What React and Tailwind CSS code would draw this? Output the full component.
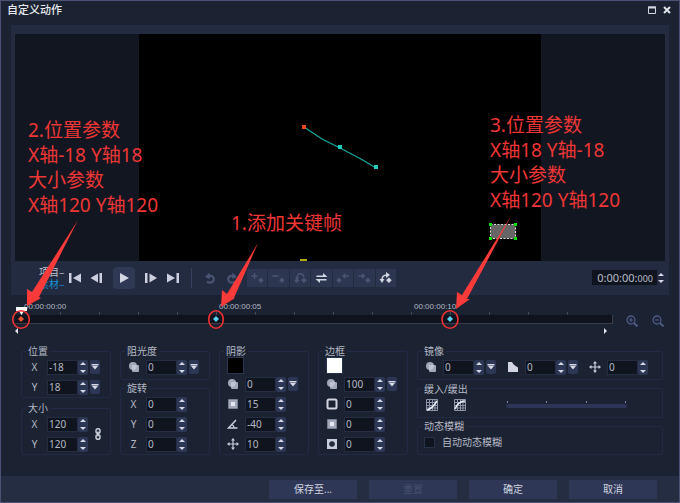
import { useState } from "react";

// ---------- small icons ----------

const iconPaths = {
  opacity: (
    <>
      <circle cx="5" cy="5" r="4" fill="#a3a8b8" />
      <rect x="4" y="4" width="7" height="7" rx="1" fill="#a3a8b8" />
      <path d="M4 8.8V5a1 1 0 0 1 1-1h3.8A4 4 0 0 1 4 8.8z" fill="#c0c4d0" />
    </>
  ),
  blur: (
    <>
      <rect x="1" y="1" width="10" height="10" rx="1" fill="#7b8194" />
      <rect x="2" y="2" width="8" height="8" fill="#a2a7ba" />
      <rect x="4" y="4" width="4" height="4" fill="#e4e7f2" />
    </>
  ),
  angle: (
    <>
      <path d="M10.5 10H1.5L9 2" fill="none" stroke="#c9cddb" strokeWidth="1.5" />
      <path d="M5 6.5a4 4 0 0 1 2 3.5" fill="none" stroke="#c9cddb" strokeWidth="1.3" />
    </>
  ),
  move: (
    <>
      <path d="M6 1.5v9M1.5 6h9" stroke="#c9cddb" strokeWidth="1.2" />
      <path
        d="M6 0l2 2.5H4zM6 12l2-2.5H4zM0 6l2.5-2v4zM12 6L9.5 4v4z"
        fill="#c9cddb"
      />
    </>
  ),
  outline: (
    <rect x="1.5" y="1.5" width="9" height="9" rx="1.5" fill="none" stroke="#d3d6e2" strokeWidth="2" />
  ),
  vignette: (
    <>
      <rect x="1" y="1" width="10" height="10" fill="#c9cddb" />
      <circle cx="6" cy="6" r="2.8" fill="#222a3c" />
    </>
  ),
  corner: <path d="M1 1h4c1 2.5 4 4.5 6 5.5V11H1z" fill="#d3d6e2" />,
};

function Icon({ name }) {
  return (
    <svg viewBox="0 0 12 12" className="h-3 w-3" aria-hidden="true">
      {iconPaths[name]}
    </svg>
  );
}

// ---------- form pieces ----------

function Stepper({ label, onStep, plain }) {
  return (
    <span className={plain ? "flex w-2 flex-col" : "flex w-2.5 flex-col rounded-xs bg-[#2c3655]"}>
      <button type="button" aria-label={`${label} +`} onClick={() => onStep(1)} className="flex h-2 items-center justify-center">
        <svg viewBox="0 0 6 3" className="h-[3px] w-1.5">
          <path d="M3 0l3 3H0z" fill="#d5d9e6" />
        </svg>
      </button>
      <button type="button" aria-label={`${label} -`} onClick={() => onStep(-1)} className="flex h-[7px] items-center justify-center">
        <svg viewBox="0 0 6 3" className="h-[3px] w-1.5">
          <path d="M3 3L0 0h6z" fill="#d5d9e6" />
        </svg>
      </button>
    </span>
  );
}

function NumberRow({ id, text, icon, title, initial, menu }) {
  const [value, setValue] = useState(initial);
  return (
    <div className="flex h-5 items-center">
      <label htmlFor={id} aria-label={title} className="flex w-[25px] justify-center leading-3">
        {icon ? <Icon name={icon} /> : text}
      </label>
      <input
        id={id}
        type="text"
        value={value}
        onChange={(e) => setValue(e.target.value)}
        className="h-[15px] w-[31px] border border-[#252d43] bg-[#10141f] pl-px text-[10px] leading-3 text-[#b4b9c6] outline-none"
      />
      <Stepper label={title || text} onStep={(d) => setValue(String(Number(value) + d))} />
      {menu && (
        <button type="button" aria-label="menu" className="ml-0.5 flex h-3.5 w-2.5 items-center justify-center rounded-xs bg-[#2c3655]">
          <svg viewBox="0 0 8 6" className="h-1.5 w-2">
            <path d="M0.5 0h7v1.5h-7zM1 2h6L4 5.5z" fill="#d5d9e6" />
          </svg>
        </button>
      )}
    </div>
  );
}

function Group({ title, className = "", children }) {
  return (
    <fieldset className={`min-w-0 rounded-xs border border-[#212b46] ${className}`}>
      <legend className="ml-1 px-0.5 leading-3">{title}</legend>
      {children}
    </fieldset>
  );
}

function Column({ children }) {
  return <div className="flex w-[90px] flex-col justify-between">{children}</div>;
}

// ---------- preview ----------

function Preview() {
  return (
    <div className="flex justify-center bg-[#121620]">
      <div className="h-[227px] w-[402px] bg-black">
        <svg viewBox="0 0 402 227" className="h-full w-full">
          <path d="M165 93L183 105 201 114 222 125 237 134" fill="none" stroke="#10a99c" strokeWidth="1.2" />
          <rect x="163" y="91" width="4" height="4" fill="#e8481c" />
          <rect x="199" y="111" width="4" height="4" fill="#1cd0bc" />
          <rect x="235" y="131" width="4" height="4" fill="#1cd0bc" />
          <rect x="351.5" y="190.5" width="25" height="14" fill="#666" stroke="#d8d8d8" strokeDasharray="2 1.5" />
          <path d="M350 189h3v3h-3zM375 189h3v3h-3zM350 203h3v3h-3zM375 203h3v3h-3z" fill="#0be00b" />
          <rect x="161" y="225" width="7" height="2" fill="#b0aa00" />
        </svg>
      </div>
    </div>
  );
}

function PlainButton({ label, children }) {
  return (
    <button type="button" aria-label={label} className="flex h-5 w-[22px] items-center justify-center">
      <svg viewBox="0 0 14 12" className="h-3 w-3.5" fill="#ccd0de">
        {children}
      </svg>
    </button>
  );
}

const keyTools = [
  {
    label: "添加关键帧",
    draw: <path d="M0.5 4h6M3.500 1v6" stroke="currentColor" strokeWidth="1.600" />,
    diamond: true,
  },
  {
    label: "移除关键帧",
    draw: <path d="M0.5 4h6" stroke="currentColor" strokeWidth="1.600" />,
    diamond: true,
  },
  {
    label: "翻转关键帧",
    draw: (
      <>
        <path d="M3 5.500C3.500 0.500 9.500 0.500 9.700 5" fill="none" stroke="currentColor" strokeWidth="1.400" />
        <path d="M1 5h4L3 8zM2.800 6l2.500 2.500-2.500 2.500L0.300 8.500z" fill="currentColor" />
      </>
    ),
    diamond: true,
  },
  {
    label: "反转",
    on: true,
    draw: (
      <>
        <path d="M1.500 4.300h9M2.500 7.700h9" stroke="currentColor" strokeWidth="1.600" />
        <path d="M8 1l4.500 4H8zM5 11L0.500 7H5z" fill="currentColor" />
      </>
    ),
  },
  {
    label: "左移关键帧",
    draw: (
      <>
        <path d="M8 4h5" stroke="currentColor" strokeWidth="1.500" />
        <path d="M9.500 1v6L6 4zM3 5.500l2.700 2.700L3 10.900 0.300 8.200z" fill="currentColor" />
      </>
    ),
  },
  {
    label: "右移关键帧",
    draw: (
      <>
        <path d="M0.500 4h5" stroke="currentColor" strokeWidth="1.500" />
        <path d="M4 1v6l3.500-3z" fill="currentColor" />
      </>
    ),
    diamond: true,
  },
  {
    label: "复制到全部",
    on: true,
    draw: (
      <>
        <path d="M3 9C2.500 4.500 5 3 8 3" fill="none" stroke="currentColor" strokeWidth="1.500" />
        <path d="M7 0l4 3-4 3zM0.500 7h5L3 11z" fill="currentColor" />
      </>
    ),
    diamond: true,
  },
];

function Transport() {
  return (
    <div className="flex h-[34px] items-center pb-px">
      <div className="ml-6 flex w-[25px] flex-col font-['Noto_Sans_CJK_SC',sans-serif] text-[10px] leading-3">
        <span className="whitespace-nowrap text-[#c3c7d3]">项目–</span>
        <span className="whitespace-nowrap text-[#1595d8]">素材–</span>
      </div>
      <PlainButton label="起始">
        <path d="M1 1h2.500v10H1zM13 1.500v9L5 6z" />
      </PlainButton>
      <PlainButton label="上一帧">
        <path d="M8 1.500v9L0.500 6zM9.500 1H12v10H9.500z" />
      </PlainButton>
      <button type="button" aria-label="播放" className="mx-[5px] flex h-[22px] w-[22px] items-center justify-center rounded-sm bg-[#2f3955]">
        <svg viewBox="0 0 10 10" className="h-2.5 w-2.5">
          <path d="M1 0l9 5-9 5z" fill="#d3d6e3" />
        </svg>
      </button>
      <PlainButton label="下一帧">
        <path d="M1 1h2.500v10H1zM5.500 1.500L13 6l-7.500 4.500z" />
      </PlainButton>
      <PlainButton label="结束">
        <path d="M1 1.500L9 6l-8 4.500zM10.500 1H13v10h-2.500z" />
      </PlainButton>
      <div className="mx-[7px] h-5 w-px bg-[#36415f]" />
      <button type="button" aria-label="撤销" className="flex h-5 w-[22px] items-center justify-center text-[#4a5573]">
        <svg viewBox="0 0 12 12" className="h-3 w-3">
          <path d="M4 4.200C7 3 10 4.500 9.800 7.500 9.500 10.300 6 11.500 3 9.800" fill="none" stroke="currentColor" strokeWidth="2.200" />
          <path d="M5.500 0.500l0.500 6.500L1 5z" fill="currentColor" />
        </svg>
      </button>
      <button type="button" aria-label="重做" className="flex h-5 w-[22px] items-center justify-center text-[#4a5573]">
        <svg viewBox="0 0 12 12" className="h-3 w-3">
          <path d="M8 4.200C5 3 2 4.500 2.200 7.500 2.500 10.300 6 11.500 9 9.800" fill="none" stroke="currentColor" strokeWidth="2.200" />
          <path d="M6.500 0.500L6 7l5-2z" fill="currentColor" />
        </svg>
      </button>
      <div className="ml-1 flex w-[149px] gap-px">
        {keyTools.map((tool) => (
          <button
            key={tool.label}
            type="button"
            aria-label={tool.label}
            className={
              "flex h-[18px] flex-1 items-center justify-center bg-[#2d3651] " +
              (tool.on ? "text-[#d3d6e3]" : "text-[#4b5573]")
            }
          >
            <svg viewBox="0 0 13 12" className="h-3 w-[13px]">
              {tool.draw}
              {tool.diamond && <path d="M9.900 5.400l2.800 2.800-2.800 2.800-2.800-2.800z" fill="currentColor" />}
            </svg>
          </button>
        ))}
      </div>
      <div className="ml-auto flex items-center">
        <div role="timer" className="flex h-[15px] w-[65px] items-baseline justify-end bg-[#10141f] pr-1 text-[11px] leading-[15px] text-[#b9becb]">
          0:00:00:<span className="text-[9px]">000</span>
        </div>
        <Stepper label="时间" plain onStep={() => {}} />
      </div>
    </div>
  );
}

// ---------- timeline ----------

function Diamond({ className }) {
  return (
    <svg viewBox="0 0 6 6" className={`absolute top-px h-1.5 w-1.5 ${className}`}>
      <path d="M3 0l3 3-3 3-3-3z" fill="currentColor" />
    </svg>
  );
}

function ZoomButton({ label, d }) {
  return (
    <button type="button" aria-label={label} className="h-3 w-3 text-[#4c5a85]">
      <svg viewBox="0 0 12 12" className="h-3 w-3" fill="none" stroke="currentColor">
        <circle cx="5" cy="5" r="4" strokeWidth="1.3" />
        <path d="M8 8l3.500 3.500" strokeWidth="2" />
        <path d={d} strokeWidth="1.2" />
      </svg>
    </button>
  );
}

function Timeline() {
  const times = ["00:00:00:00", "00:00:00:05", "00:00:00:10"];
  const ticks = Array.from({ length: 15 }, (_, i) => i);
  return (
    <div className="flex h-[50px] pl-3.5">
      <div className="flex-1 pt-1.5">
        <div className="flex h-[11px] overflow-hidden pl-[9px] font-['Liberation_Sans',sans-serif] text-[8px] leading-3 text-[#b4b9c6]">
          {times.map((t) => (
            <span key={t} className="w-[195px] shrink-0">{t}</span>
          ))}
        </div>
        <div className="flex h-[3px] overflow-hidden pl-1.5">
          {ticks.map((i) => (
            <span key={i} className="w-[39px] shrink-0 border-l border-[#454a58]" />
          ))}
        </div>
        <div className="relative h-[9px] border-r border-b border-[#3b3e49] bg-[#10131d]">
          <Diamond className="left-[3px] text-[#e8532f]" />
          <Diamond className="left-[198px] text-[#5bd0f0]" />
          <Diamond className="left-[432px] text-[#5bd0f0]" />
          <svg viewBox="0 0 11 8" className="absolute -top-2 left-px h-2 w-[11px]">
            <path d="M0 0h11v4H8L5.5 8 3 4H0z" fill="#fff" />
          </svg>
        </div>
        <div className="flex items-center justify-between pt-1 pr-1.5">
          <svg viewBox="0 0 4 6" className="h-1.5 w-1">
            <path d="M3 0v6L0 3z" fill="#e1e4ec" />
          </svg>
          <svg viewBox="0 0 4 6" className="h-1.5 w-1">
            <path d="M1 0v6l3-3z" fill="#e1e4ec" />
          </svg>
        </div>
      </div>
      <div className="flex w-[66px] gap-3.5 pt-5 pl-[13px]">
        <ZoomButton label="放大" d="M3 5h4M5 3v4" />
        <ZoomButton label="缩小" d="M3 5h4" />
      </div>
    </div>
  );
}

// ---------- parameters ----------

function EaseButton({ label, d }) {
  return (
    <button type="button" aria-label={label} className="h-3 w-3">
      <svg viewBox="0 0 12 12" className="h-3 w-3" fill="none">
        <path d="M0.5 0.5h11v11H0.5zM3.500 0.500v11M6.500 0.500v11M9 0.500v11M0.500 3.500h11M0.500 6.500h11M0.500 9h11" stroke="#8f95a8" />
        <path d={d} stroke="#e9ebf3" strokeWidth="1.6" />
      </svg>
    </button>
  );
}

function Parameters() {
  return (
    <div className="flex h-[110px] gap-[9px] pr-4 pl-5 text-[10px]">
      <Column>
        <Group title="位置">
          <NumberRow id="pos-x" text="X" initial="-18" menu />
          <NumberRow id="pos-y" text="Y" initial="18" menu />
        </Group>
        <Group title="大小">
          <div className="flex items-center">
            <div>
              <NumberRow id="size-x" text="X" initial="120" />
              <NumberRow id="size-y" text="Y" initial="120" />
            </div>
            <button type="button" aria-label="保持宽高比" className="ml-1.5 h-3 w-2">
              <svg viewBox="0 0 8 12" className="h-3 w-2" fill="none" stroke="#d3d6e2" strokeWidth="1.4">
                <rect x="2" y="0.8" width="4" height="4.6" rx="1.8" />
                <rect x="2" y="6.6" width="4" height="4.6" rx="1.8" />
                <path d="M4 3.500v5" />
              </svg>
            </button>
          </div>
        </Group>
      </Column>
      <Column>
        <Group title="阻光度" className="pb-0.5">
          <NumberRow id="opacity" icon="opacity" title="阻光度" initial="0" menu />
        </Group>
        <Group title="旋转">
          <NumberRow id="rot-x" text="X" initial="0" />
          <NumberRow id="rot-y" text="Y" initial="0" />
          <NumberRow id="rot-z" text="Z" initial="0" />
        </Group>
      </Column>
      <Column>
        <Group title="阴影">
          <button type="button" aria-label="阴影颜色" className="ml-[7px] block h-[17px] w-[17px] border border-[#2a3350] bg-black" />
          <NumberRow id="shadow-opacity" icon="opacity" title="阴影透明度" initial="0" menu />
          <NumberRow id="shadow-blur" icon="blur" title="阴影模糊" initial="15" />
          <NumberRow id="shadow-angle" icon="angle" title="阴影角度" initial="-40" />
          <NumberRow id="shadow-distance" icon="move" title="阴影距离" initial="10" />
        </Group>
      </Column>
      <Column>
        <Group title="边框">
          <button type="button" aria-label="边框颜色" className="ml-[7px] block h-[17px] w-[17px] border border-[#2a3350] bg-white" />
          <NumberRow id="border-opacity" icon="opacity" title="边框透明度" initial="100" menu />
          <NumberRow id="border-size" icon="outline" title="边框大小" initial="0" />
          <NumberRow id="border-blur" icon="blur" title="边框模糊" initial="0" />
          <NumberRow id="border-inner" icon="vignette" title="边框羽化" initial="0" />
        </Group>
      </Column>
      <div className="flex flex-1 flex-col justify-between">
        <Group title="镜像" className="pb-0.5">
          <div className="flex gap-1">
            <NumberRow id="mirror-opacity" icon="opacity" title="镜像阻光度" initial="0" menu />
            <NumberRow id="mirror-fade" icon="corner" title="镜像淡出" initial="0" menu />
            <NumberRow id="mirror-offset" icon="move" title="镜像偏移" initial="0" />
          </div>
        </Group>
        <Group title="缓入/缓出" className="pb-0.5">
          <div className="flex h-5 items-center pl-2">
            <EaseButton label="缓入" d="M1 11C5 10 8 7 11 2" />
            <span className="w-4" />
            <EaseButton label="缓出" d="M1 10C3 5 6 2 11 2" />
            <div className="ml-10 w-[121px]">
              <div className="flex justify-between px-px">
                <span className="h-0.5 w-px bg-[#7b849c]" />
                <span className="h-0.5 w-px bg-[#7b849c]" />
                <span className="h-0.5 w-px bg-[#7b849c]" />
                <span className="h-0.5 w-px bg-[#7b849c]" />
              </div>
              <input
                type="range"
                aria-label="缓入/缓出"
                disabled
                className="mt-px block h-1 w-full appearance-none rounded-full bg-[#2c3555] [&::-webkit-slider-thumb]:h-0 [&::-webkit-slider-thumb]:w-0 [&::-webkit-slider-thumb]:appearance-none"
              />
            </div>
          </div>
        </Group>
        <Group title="动态模糊" className="pb-0.5">
          <label className="flex h-5 items-center gap-[7px] pl-1.5">
            <input type="checkbox" className="h-[11px] w-[11px] appearance-none border border-[#28314b] bg-[#10141f] checked:bg-[#1595d8]" />
            自动动态模糊
          </label>
        </Group>
      </div>
    </div>
  );
}

// ---------- red notes drawn over the window ----------

function Note({ className, lines }) {
  return (
    <div className={`absolute text-[19px] leading-[25px] whitespace-nowrap text-[#ee3636] ${className}`}>
      {lines.map((line) => (
        <p key={line}>{line}</p>
      ))}
    </div>
  );
}

function Notes() {
  return (
    <div className="pointer-events-none absolute -inset-px">
      <svg width="680" height="503" viewBox="0 0 680 503" className="absolute top-0 left-0">
        <g fill="#fb3a3a">
          <path d="M78 220L39 297l2 1-14 8 0-17 5 3z" />
          <path d="M258 243L234 298l1 0-14 9 1-17 5 4z" />
          <path d="M511 216L467 299l3 0-14 10 1-17 5 3z" />
        </g>
        <g fill="none" stroke="#f03232" strokeWidth="1.6">
          <ellipse cx="21" cy="319.5" rx="8.3" ry="8.8" />
          <ellipse cx="216" cy="319.5" rx="7.3" ry="8.8" />
          <ellipse cx="450" cy="319.5" rx="8" ry="8.8" />
        </g>
      </svg>
      <Note className="top-[118px] left-7" lines={["2.位置参数", "X轴-18 Y轴18", "大小参数", "X轴120 Y轴120"]} />
      <Note className="top-[211px] left-[231px]" lines={["1.添加关键帧"]} />
      <Note className="top-[113px] left-[490px]" lines={["3.位置参数", "X轴18 Y轴-18", "大小参数", "X轴120 Y轴120"]} />
    </div>
  );
}

function FooterButton({ children, disabled }) {
  return (
    <button
      type="button"
      disabled={disabled}
      className="h-[19px] w-[88px] bg-[#2e3856] text-[10px] leading-3 text-[#d0d4e0] disabled:text-[#46506e]"
    >
      {children}
    </button>
  );
}

export default function App() {
  return (
    <div className="relative flex min-h-screen flex-col overflow-hidden border border-[#4a5276] bg-[#1b2231] font-['Noto_Sans','Noto_Sans_CJK_SC',sans-serif] text-[#b4b9c6]">
      <header className="flex h-6 items-center justify-between pr-2 pl-1.5">
        <h1 className="pb-1.5 text-[11px] leading-4 font-medium text-[#e6e8ee]">自定义动作</h1>
        <div className="flex gap-[7px] pb-1.5">
          <button type="button" aria-label="最大化" className="h-2 w-2">
            <svg viewBox="0 0 8 8" className="h-2 w-2">
              <path d="M0.5 1h7v6.500h-7z" fill="none" stroke="#d3d6e0" />
              <path d="M0 0.500h8v2H0z" fill="#d3d6e0" />
            </svg>
          </button>
          <button type="button" aria-label="关闭" className="h-2 w-2">
            <svg viewBox="0 0 8 8" className="h-2 w-2">
              <path d="M1 1l6 6M7 1L1 7" stroke="#e1e3ea" strokeWidth="2" />
            </svg>
          </button>
        </div>
      </header>

      <section className="mx-2.5 bg-[#232b40] px-1 pt-[9px]">
        <Preview />
        <Transport />
      </section>

      <Timeline />
      <Parameters />

      <footer className="mt-auto flex h-[26px] items-center justify-end gap-3 bg-[#252d42] pr-[22px]">
        <FooterButton>保存至...</FooterButton>
        <FooterButton disabled>重置</FooterButton>
        <FooterButton>确定</FooterButton>
        <FooterButton>取消</FooterButton>
      </footer>

      <Notes />
    </div>
  );
}
